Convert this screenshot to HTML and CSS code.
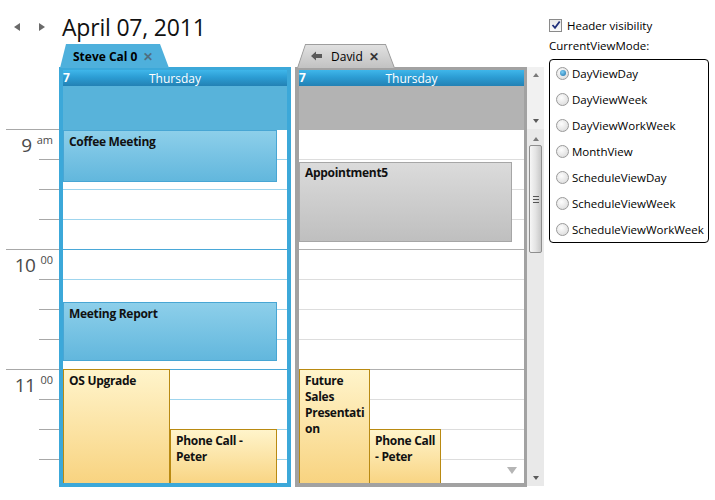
FILE: index.html
```html
<!DOCTYPE html>
<html>
<head>
<meta charset="utf-8">
<link rel="stylesheet" href="styles.css">
</head>
<body>
<div class="app">
  <div class="cal">
    <div class="nav">
      <span class="navbtn prev"></span>
      <span class="navbtn next"></span>
      <div class="title">April 07, 2011</div>
    </div>
    <div class="grid">
      <div class="gutter">
        <div class="hour">
          <div class="lbl"><span class="num">9</span><span class="sup">am</span></div>
          <div class="q"></div><div class="q"></div><div class="q"></div>
        </div>
        <div class="hour">
          <div class="lbl"><span class="num">10</span><span class="sup">00</span></div>
          <div class="q"></div><div class="q"></div><div class="q"></div>
        </div>
        <div class="hour">
          <div class="lbl"><span class="num">11</span><span class="sup">00</span></div>
          <div class="q"></div><div class="q"></div><div class="q"></div>
        </div>
      </div>

      <div class="col col-blue">
        <div class="tab"><div class="tab-in"><span class="tab-label">Steve Cal 0</span><span class="x">✕</span></div></div>
        <div class="frame">
          <div class="dayhead"><b>7</b><span>Thursday</span></div>
          <div class="allday"></div>
          <div class="body">
            <div class="slot"></div><div class="slot"></div><div class="slot"></div><div class="slot hr"></div>
            <div class="slot"></div><div class="slot"></div><div class="slot"></div><div class="slot hr"></div>
            <div class="slot"></div><div class="slot"></div><div class="slot"></div><div class="slot hr"></div>
            <div class="ev ev-blue" style="top:0;left:0;width:214px;height:52px">Coffee Meeting</div>
            <div class="ev ev-blue" style="top:172px;left:0;width:214px;height:59px">Meeting Report</div>
            <div class="ev ev-yellow" style="top:239px;left:0;width:107px;height:120px">OS Upgrade</div>
            <div class="ev ev-yellow" style="top:299px;left:107px;width:107px;height:60px">Phone Call - Peter</div>
          </div>
        </div>
      </div>

      <div class="col col-gray">
        <div class="tab"><div class="tab-in">
          <svg class="back" width="12" height="10" viewBox="0 0 12 10"><path d="M0 5 L5 0.5 V3 H11 V7 H5 V9.5 Z" fill="#5a5a5a"/></svg>
          <span class="tab-label">David</span><span class="x">✕</span></div></div>
        <div class="frame">
          <div class="dayhead"><b>7</b><span>Thursday</span></div>
          <div class="allday"></div>
          <div class="body">
            <div class="slot"></div><div class="slot"></div><div class="slot"></div><div class="slot hr"></div>
            <div class="slot"></div><div class="slot"></div><div class="slot"></div><div class="slot hr"></div>
            <div class="slot"></div><div class="slot"></div><div class="slot"></div><div class="slot hr"></div>
            <div class="ev ev-gray" style="top:32px;left:0;width:213px;height:80px">Appointment5</div>
            <div class="ev ev-yellow narrow" style="top:239px;left:0;width:71px;height:120px">Future Sales Presentation</div>
            <div class="ev ev-yellow tight" style="top:299px;left:70px;width:72px;height:60px">Phone Call - Peter</div>
            <span class="more"></span>
          </div>
        </div>
      </div>

      <div class="scroll">
        <div class="sb-top">
          <span class="tri up"></span>
          <span class="tri down"></span>
        </div>
        <div class="sb-main">
          <span class="tri up"></span>
          <div class="thumb"><span class="grip"></span></div>
          <span class="spacer"></span>
          <span class="tri down"></span>
        </div>
      </div>
    </div>
  </div>

  <div class="panel">
    <label class="check"><span class="cb"><svg width="10" height="10" viewBox="0 0 10 10"><path d="M1.5 5 L4 7.8 L8.7 1.5" fill="none" stroke="#1f2f7a" stroke-width="1.8"/></svg></span>Header visibility</label>
    <div class="cvm">CurrentViewMode:</div>
    <div class="box">
      <div class="radio on"><span class="rd"></span>DayViewDay</div>
      <div class="radio"><span class="rd"></span>DayViewWeek</div>
      <div class="radio"><span class="rd"></span>DayViewWorkWeek</div>
      <div class="radio"><span class="rd"></span>MonthView</div>
      <div class="radio"><span class="rd"></span>ScheduleViewDay</div>
      <div class="radio"><span class="rd"></span>ScheduleViewWeek</div>
      <div class="radio"><span class="rd"></span>ScheduleViewWorkWeek</div>
    </div>
  </div>
</div>
</body>
</html>
```

FILE: styles.css
```css
html, body {
  margin: 0;
  padding: 0;
  background: #ffffff;
}
body {
  font-family: "Segoe UI", "Open Sans", "Noto Sans", sans-serif;
  font-size: 12px;
  color: #000;
  width: 715px;
  height: 500px;
  overflow: hidden;
}
.app {
  display: flex;
}
.cal {
  width: 549px;
  display: flex;
  flex-direction: column;
}
.nav {
  height: 44px;
  display: flex;
  align-items: flex-start;
  box-sizing: border-box;
  padding-left: 14px;
}
.navbtn {
  width: 0;
  height: 0;
  border-top: 4.5px solid transparent;
  border-bottom: 4.5px solid transparent;
  margin-top: 23px;
}
.navbtn.prev {
  border-right: 6px solid #6a6a6a;
}
.navbtn.next {
  border-left: 6px solid #6a6a6a;
  margin-left: 19px;
}
.title {
  margin-left: 17px;
  margin-top: 12px;
  font-size: 23px;
  line-height: 30px;
  color: #111;
  letter-spacing: -0.2px;
}
.grid {
  display: flex;
  align-items: flex-start;
}
.gutter {
  width: 53px;
  padding-left: 6px;
  padding-top: 85px;
}
.hour {
  height: 120px;
  box-sizing: border-box;
  border-top: 1px solid #a8a8a8;
  display: grid;
  grid-template-rows: 29px 30px 30px 30px;
}
.q {
  margin-left: 33px;
  border-top: 1px solid #a8a8a8;
}
.lbl {
  display: flex;
  justify-content: flex-end;
  align-items: flex-start;
  padding-right: 6px;
  color: #4a4a4a;
  padding-top: 4px;
}
.num {
  font-size: 19px;
  line-height: 22px;
  font-weight: normal;
  letter-spacing: -0.5px;
}
.sup {
  font-size: 11px;
  line-height: 12px;
  margin-left: 5px;
}
.col {
  width: 232px;
  display: flex;
  flex-direction: column;
}
.col-gray {
  margin-left: 4px;
}
.tab {
  height: 23px;
  position: relative;
}
.tab-in {
  position: absolute;
  top: 0;
  bottom: -1px;
  display: flex;
  align-items: center;
  box-sizing: border-box;
}
.col-blue .tab-in {
  left: 1px;
  width: 109px;
  background: #4eb0dc;
  clip-path: polygon(6px 0, 100px 0, 109px 100%, 0 100%);
  padding-left: 13px;
  font-weight: bold;
}
.col-gray .tab-in {
  left: 2px;
  width: 98px;
  background: linear-gradient(#e2e2e2, #c2c2c2);
  clip-path: polygon(8px 0, 89px 0, 98px 100%, 0 100%);
  padding-left: 14px;
}
.col-gray .tab-in::before {
  content: "";
  position: absolute;
  inset: 0;
  background: #9e9e9e;
  clip-path: polygon(8px 0, 89px 0, 98px 100%, 97px 100%, 88.3px 1px, 8.7px 1px, 1px 100%, 0 100%);
}
.back {
  margin-right: 8px;
}
.tab-label {
  font-size: 12px;
}
.x {
  margin-left: 6px;
  color: #4f6f80;
  font-weight: bold;
  font-size: 12px;
}
.col-gray .x {
  color: #333;
}
.frame {
  height: 420px;
  box-sizing: border-box;
  display: flex;
  flex-direction: column;
  border-style: solid;
  border-width: 3px 4px 4px 4px;
}
.col-blue .frame {
  border-color: #3ca8d9;
}
.col-gray .frame {
  border-color: #a2a2a2;
  border-right-width: 3px;
}
.dayhead {
  height: 16px;
  flex: none;
  background: linear-gradient(#3fb6ea 0%, #2c9dd4 45%, #2381b4 100%);
  color: #fff;
  position: relative;
  display: flex;
  align-items: center;
  justify-content: center;
  line-height: 16px;
  padding-top: 1px;
  box-sizing: border-box;
}
.dayhead b {
  position: absolute;
  left: 0;
  top: 0;
  font-size: 12px;
}
.allday {
  height: 44px;
  flex: none;
}
.col-blue .allday {
  background: #58b3da;
}
.col-gray .allday {
  background: #b3b3b3;
}
.body {
  flex: 1;
  position: relative;
  overflow: hidden;
  background: #fff;
}
.slot {
  height: 30px;
  box-sizing: border-box;
  border-bottom: 1px solid #9fd5ee;
}
.slot.hr {
  border-bottom-color: #4aa8d8;
}
.col-gray .slot {
  border-bottom-color: #dddddd;
}
.col-gray .slot.hr {
  border-bottom-color: #b0b0b0;
}
.ev {
  position: absolute;
  box-sizing: border-box;
  border: 1px solid;
  padding: 3px 5px;
  font-weight: bold;
  font-size: 12px;
  line-height: 16px;
  letter-spacing: -0.3px;
  color: #111;
  overflow-wrap: anywhere;
}
.ev-blue {
  background: linear-gradient(#8dcfea, #62b7dd);
  border-color: #48a6d4;
}
.ev-yellow {
  background: linear-gradient(#fff4cb, #f8d27d);
  border-color: #b98a12;
}
.ev-gray {
  background: linear-gradient(#dbdbdb, #bfbfbf);
  border-color: #a6a6a6;
  padding-top: 2px;
}
.narrow {
  padding-right: 3px;
}
.tight {
  padding-right: 0;
}
.more {
  position: absolute;
  right: 7px;
  bottom: 9px;
  width: 0;
  height: 0;
  border-left: 5px solid transparent;
  border-right: 5px solid transparent;
  border-top: 7px solid #b5b5b5;
}
.scroll {
  width: 17px;
  margin-top: 23px;
  display: flex;
  flex-direction: column;
}
.sb-top {
  height: 62px;
  background: #f1f1f1;
  display: flex;
  flex-direction: column;
  align-items: center;
  justify-content: space-between;
  padding: 6px 0 6px;
  box-sizing: border-box;
}
.sb-main {
  height: 357px;
  background: #e9e9e9;
  display: flex;
  flex-direction: column;
  align-items: center;
  padding: 8px 0 6px;
  box-sizing: border-box;
}
.tri {
  width: 0;
  height: 0;
  border-left: 3.5px solid transparent;
  border-right: 3.5px solid transparent;
}
.tri.up {
  border-bottom: 4px solid #7a7a7a;
}
.tri.down {
  border-top: 4px solid #5a5a5a;
}
.thumb {
  margin-top: 4px;
  width: 13px;
  height: 108px;
  box-sizing: border-box;
  border: 1px solid #8e8e8e;
  border-radius: 2px;
  background: linear-gradient(90deg, #f6f6f6, #e4e4e4 50%, #c8c8c8);
  display: flex;
  align-items: center;
  justify-content: center;
}
.grip {
  width: 6px;
  height: 5px;
  border-top: 1px solid #555;
  border-bottom: 1px solid #555;
  position: relative;
}
.grip::after {
  content: "";
  position: absolute;
  left: 0;
  right: 0;
  top: 2px;
  border-top: 1px solid #555;
}
.spacer {
  flex: 1;
}
.panel {
  width: 160px;
  padding-top: 16px;
  display: flex;
  flex-direction: column;
  font-size: 11.5px;
}
.check {
  display: flex;
  align-items: center;
  height: 18px;
}
.cb {
  width: 11px;
  height: 11px;
  border: 1px solid #8a8a8a;
  background: linear-gradient(#e8e8e8, #fafafa);
  margin-right: 5px;
  display: flex;
  align-items: center;
  justify-content: center;
}
.cvm {
  margin-top: 3px;
  height: 18px;
  line-height: 18px;
}
.box {
  margin-top: 4px;
  width: 160px;
  box-sizing: border-box;
  border: 1px solid #000;
  border-radius: 4px;
  padding: 0 0 0 6px;
  display: flex;
  flex-direction: column;
}
.radio {
  height: 26px;
  flex: none;
  display: flex;
  align-items: center;
  white-space: nowrap;
}
.rd {
  width: 11px;
  height: 11px;
  border-radius: 50%;
  border: 1px solid #9a9a9a;
  background: radial-gradient(circle at 40% 35%, #fdfdfd, #d6d6d6);
  margin-right: 3px;
  position: relative;
  flex: none;
}
.radio.on .rd::after {
  content: "";
  position: absolute;
  left: 2.5px;
  top: 2.5px;
  width: 6px;
  height: 6px;
  border-radius: 50%;
  background: radial-gradient(circle at 40% 35%, #7fd0f7, #1a6ea6);
}
```
